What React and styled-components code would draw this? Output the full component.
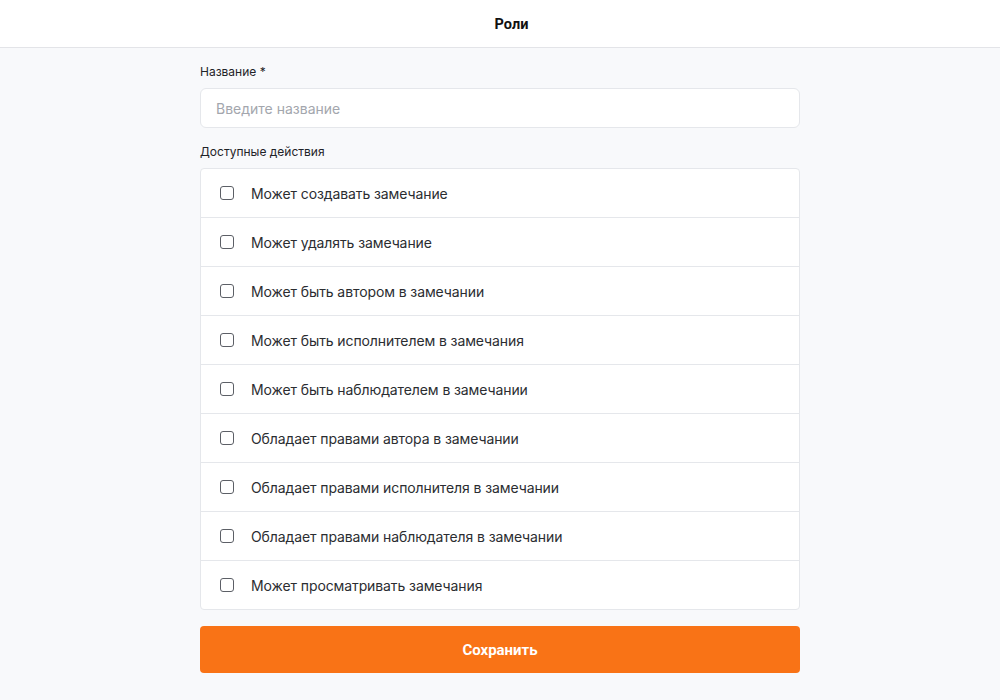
import styled, { createGlobalStyle } from "styled-components";

const actions = [
    "Может создавать замечание",
    "Может удалять замечание",
    "Может быть автором в замечании",
    "Может быть исполнителем в замечания",
    "Может быть наблюдателем в замечании",
    "Обладает правами автора в замечании",
    "Обладает правами исполнителя в замечании",
    "Обладает правами наблюдателя в замечании",
    "Может просматривать замечания",
];

export default function App() {
    return (
        <>
            <GlobalStyle />
            <StyledPage>
                <StyledHeader>Роли</StyledHeader>
                <StyledForm>
                    <StyledLabel>Название *</StyledLabel>
                    <StyledInput placeholder="Введите название" />
                    <StyledLabel>Доступные действия</StyledLabel>
                    <StyledList>
                        {actions.map((text, idx) => (
                            <StyledRow key={idx}>
                                <StyledCheckbox type="checkbox" />
                                <span>{text}</span>
                            </StyledRow>
                        ))}
                    </StyledList>
                    <StyledButton>Сохранить</StyledButton>
                </StyledForm>
            </StyledPage>
        </>
    );
}

const GlobalStyle = createGlobalStyle`
    body {
        margin: 0;
        background-color: #f8f9fb;
        font-family: Inter, "Noto Sans", sans-serif;
    }
`;

const StyledPage = styled.div`
    min-height: 700px;
    display: flex;
    flex-direction: column;
`;

const StyledHeader = styled.div`
    height: 48px;
    box-sizing: border-box;
    background-color: #ffffff;
    border-bottom: 1px solid #e3e4e8;
    display: flex;
    align-items: center;
    justify-content: center;
    padding: 2px 0 0 23px;
    font-family: Roboto, sans-serif;
    font-weight: 700;
    font-size: 14.5px;
    color: #111;
`;

const StyledForm = styled.div`
    width: 600px;
    margin: 0 auto;
    padding-top: 16px;
    display: flex;
    flex-direction: column;
`;

const StyledLabel = styled.label`
    font-size: 12px;
    line-height: 16px;
    color: #1f2328;
    margin-bottom: 8px;
`;

const StyledInput = styled.input`
    height: 40px;
    box-sizing: border-box;
    border: 1px solid #e5e7eb;
    border-radius: 6px;
    background-color: #ffffff;
    padding: 0 15px;
    font-family: Inter, sans-serif;
    font-size: 14px;
    margin-bottom: 16px;
    outline: none;
    &::placeholder {
        color: #a3a6ad;
    }
`;

const StyledList = styled.ul`
    margin: 0;
    padding: 0;
    list-style: none;
    background-color: #ffffff;
    border: 1px solid #e5e7eb;
    border-radius: 4px;
`;

const StyledRow = styled.li`
    height: 48px;
    display: flex;
    align-items: center;
    padding-left: 19px;
    gap: 17px;
    font-size: 14px;
    letter-spacing: -0.1px;
    color: #2b2d31;
    border-bottom: 1px solid #e5e7eb;
    &:last-child {
        border-bottom: none;
    }
`;

const StyledCheckbox = styled.input`
    appearance: none;
    width: 14px;
    height: 14px;
    margin: 0;
    border: 1px solid #5c5f66;
    border-radius: 3px;
    background-color: #ffffff;
`;

const StyledButton = styled.button`
    margin-top: 16px;
    height: 47px;
    border: none;
    border-radius: 4px;
    background-color: #f97316;
    color: #ffffff;
    font-family: Roboto, sans-serif;
    font-weight: 700;
    font-size: 15px;
`;
